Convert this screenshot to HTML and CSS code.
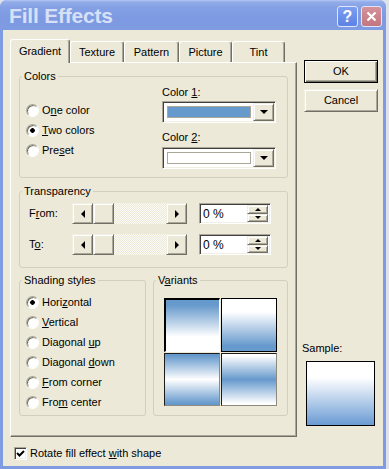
FILE: index.html
```html
<!DOCTYPE html>
<html>
 <head>
  <meta charset="UTF-8">
  <title>Fill Effects</title>
  <link rel="stylesheet" href="styles.css">
 </head>
 <body>
  <div class="win">
   <div class="title">
    <span class="title-text">Fill Effects</span>
    <div class="cap-btns">
     <span class="cap-btn help">?</span>
     <span class="cap-btn close">
      <svg width="11" height="11" viewBox="0 0 11 11"><path d="M1.5 1.5 L9.5 9.5 M9.5 1.5 L1.5 9.5" stroke="#fff" stroke-width="2.2"/></svg>
     </span>
    </div>
   </div>
   <div class="client">
    <div class="main">
     <div class="left">
      <div class="tabs">
       <div class="tab sel" style="width:60px">Gradient</div>
       <div class="tab" style="width:54px">Texture</div>
       <div class="tab" style="width:55px">Pattern</div>
       <div class="tab" style="width:53px">Picture</div>
       <div class="tab" style="width:53px">Tint</div>
      </div>
      <div class="panel">
       <fieldset class="grp colors">
        <legend>Colors</legend>
        <div class="colors-body">
         <div class="radios">
          <div class="opt"><span class="rb"></span><span>O<u>n</u>e color</span></div>
          <div class="opt"><span class="rb on"></span><span><u>T</u>wo colors</span></div>
          <div class="opt"><span class="rb"></span><span>Pre<u>s</u>et</span></div>
         </div>
         <div class="pickers">
          <div class="lbl">Color <u>1</u>:</div>
          <div class="combo sunken">
           <span class="swatch blue"></span>
           <span class="drop raised"><span class="tri-d"></span></span>
          </div>
          <div class="lbl lbl2">Color <u>2</u>:</div>
          <div class="combo sunken">
           <span class="swatch white"></span>
           <span class="drop raised"><span class="tri-d"></span></span>
          </div>
         </div>
        </div>
       </fieldset>

       <fieldset class="grp trans">
        <legend>Transparency</legend>
        <div class="trow">
         <span class="tlbl">F<u>r</u>om:</span>
         <div class="sb">
          <span class="sbtn raised"><span class="tri-l"></span></span>
          <span class="thumb raised"></span>
          <span class="track"></span>
          <span class="sbtn raised"><span class="tri-r"></span></span>
         </div>
         <div class="spin sunken">
          <span class="spin-val">0 %</span>
          <span class="spin-btns">
           <span class="sp raised"><span class="tri-u"></span></span>
           <span class="sp raised"><span class="tri-d small"></span></span>
          </span>
         </div>
        </div>
        <div class="trow trow2">
         <span class="tlbl">T<u>o</u>:</span>
         <div class="sb">
          <span class="sbtn raised"><span class="tri-l"></span></span>
          <span class="thumb raised"></span>
          <span class="track"></span>
          <span class="sbtn raised"><span class="tri-r"></span></span>
         </div>
         <div class="spin sunken">
          <span class="spin-val">0 %</span>
          <span class="spin-btns">
           <span class="sp raised"><span class="tri-u"></span></span>
           <span class="sp raised"><span class="tri-d small"></span></span>
          </span>
         </div>
        </div>
       </fieldset>

       <div class="bottom-row">
        <fieldset class="grp shading">
         <legend>Shading styles</legend>
         <div class="opt"><span class="rb on"></span><span>Hori<u>z</u>ontal</span></div>
         <div class="opt"><span class="rb"></span><span><u>V</u>ertical</span></div>
         <div class="opt"><span class="rb"></span><span>Diagonal <u>u</u>p</span></div>
         <div class="opt"><span class="rb"></span><span>Diagonal <u>d</u>own</span></div>
         <div class="opt"><span class="rb"></span><span><u>F</u>rom corner</span></div>
         <div class="opt"><span class="rb"></span><span>Fro<u>m</u> center</span></div>
        </fieldset>
        <fieldset class="grp variants">
         <legend>V<u>a</u>riants</legend>
         <div class="tiles">
          <span class="tile t1 sel"></span>
          <span class="tile t2"></span>
          <span class="tile t3"></span>
          <span class="tile t4"></span>
         </div>
        </fieldset>
       </div>
      </div>
     </div>
     <div class="right">
      <div class="btn def">OK</div>
      <div class="btn raised">Cancel</div>
      <div class="sample">
       <div class="sample-lbl">Sample:</div>
       <div class="sample-box"></div>
      </div>
     </div>
    </div>
    <div class="foot">
     <span class="cb sunken">
      <svg width="9" height="9" viewBox="0 0 9 9"><path d="M1 4 L3.5 6.5 L8 2" stroke="#000" stroke-width="2" fill="none"/></svg>
     </span>
     <span>Rotate fill effect <u>w</u>ith shape</span>
    </div>
   </div>
  </div>
 </body>
</html>
```

FILE: styles.css
```css
*{ margin:0; padding:0; box-sizing:border-box;}

body{
 background:#dfe2ea;
 font-family:"Liberation Sans", Arial, sans-serif;
 font-size:11px;
 line-height:13px;
 color:#000;
}

u{ text-decoration:underline; text-underline-offset:1px;}

.win{
 width:386px;
 height:469px;
 background:#7f9be2;
 border-radius:7px 7px 0 0;
 display:flex;
 flex-direction:column;
}

.title{
 height:30px;
 display:flex;
 justify-content:space-between;
 border-radius:7px 7px 0 0;
 background:linear-gradient(#b4c6f3 0, #93ace9 2px, #84a0e5 8px, #7d99e1 60%, #7f9be2 100%);
}
.title-text{
 padding:4px 0 0 9px;
 font-size:21px;
 line-height:24px;
 font-weight:bold;
 color:#d6e0f7;
 letter-spacing:-0.2px;
}

.cap-btns{
 display:flex;
 gap:3px;
 margin:6px 4px 0 0;
}
.cap-btn{
 width:21px;
 height:21px;
 border:1px solid #dfe6fa;
 border-radius:3px;
 display:flex;
 align-items:center;
 justify-content:center;
 color:#fff;
 font-weight:bold;
 font-size:16px;
}
.cap-btn.help{ background:linear-gradient(#7d9ff0, #5c82e4);}
.cap-btn.close{ background:linear-gradient(#d6929a, #c27680);}

.client{
 flex:1;
 margin:0 3px 3px 3px;
 background:#ece9d8;
 padding:9px 0 0 7px;
}

.main{ display:flex;}

.left{ width:287px;}

/* tabs */
.tabs{
 height:23px;
 display:flex;
 align-items:flex-end;
}
.tab{
 height:21px;
 border:1px solid #fff;
 border-right-color:#716f64;
 border-bottom:none;
 border-radius:3px 3px 0 0;
 box-shadow:inset -1px 0 #aca899;
 text-align:center;
 padding-top:4px;
 background:#ece9d8;
}
.tab.sel{
 height:24px;
 margin-bottom:-1px;
 position:relative;
 z-index:1;
 padding-top:5px;
}

.panel{
 height:375px;
 border:1px solid #fff;
 border-right-color:#716f64;
 border-bottom-color:#716f64;
 box-shadow:inset -1px -1px #aca899;
}

/* group boxes */
.grp{
 border:1px solid #d0d0bf;
 border-radius:3px;
 min-width:0;
 margin:0 8px;
}
.grp legend{
 padding:0 2px;
 margin-left:2px;
 line-height:13px;
}

.colors{ margin-top:7px; padding-bottom:8px;}
.colors-body{ display:flex;}
.radios{
 width:142px;
 padding:17px 0 0 6px;
}
.opt{
 height:20px;
 display:flex;
 align-items:center;
 gap:3px;
}
.rb{
 width:13px;
 height:13px;
 border-radius:50%;
 border:1px solid;
 border-color:#aca899 #fff #fff #aca899;
 box-shadow:inset 1px 1px #716f64;
 background:#fff;
 flex:none;
}
.rb.on{ background:radial-gradient(circle, #000 0 2px, #fff 2.6px);}

.pickers{ padding-top:3px;}
.lbl{ margin-bottom:2px;}
.lbl2{ margin-top:8px; margin-bottom:3px;}

.sunken{
 border:1px solid;
 border-color:#aca899 #fff #fff #aca899;
 box-shadow:inset 1px 1px #404040, inset -1px -1px #f1efe2;
}
.raised{
 background:#ece9d8;
 border:1px solid;
 border-color:#f1efe2 #716f64 #716f64 #f1efe2;
 box-shadow:inset 1px 1px #fff, inset -1px -1px #aca899;
}

.combo{
 width:114px;
 height:22px;
 background:#fff;
 display:flex;
 align-items:center;
 padding:1px 1px 1px 4px;
}
.swatch{
 width:84px;
 height:12px;
 border:1px solid #aca899;
}
.swatch.blue{ background:#6699cc;}
.swatch.white{ background:#fff;}
.drop{
 margin-left:auto;
 width:21px;
 height:18px;
 display:flex;
 align-items:center;
 justify-content:center;
}

.tri-d{ width:0; height:0; border-left:4px solid transparent; border-right:4px solid transparent; border-top:4px solid #000;}
.tri-d.small{ border-left-width:3px; border-right-width:3px; border-top-width:3px;}
.tri-u{ width:0; height:0; border-left:3px solid transparent; border-right:3px solid transparent; border-bottom:3px solid #000;}
.tri-l{ width:0; height:0; border-top:4px solid transparent; border-bottom:4px solid transparent; border-right:4px solid #000;}
.tri-r{ width:0; height:0; border-top:4px solid transparent; border-bottom:4px solid transparent; border-left:4px solid #000;}

/* transparency */
.trans{ margin-top:7px; padding-bottom:12px;}
.trow{
 display:flex;
 align-items:center;
 margin-top:5px;
 padding-left:9px;
}
.trow2{ margin-top:10px;}
.tlbl{ width:43px;}
.sb{
 display:flex;
 width:115px;
 height:21px;
}
.sbtn{
 width:21px;
 display:flex;
 align-items:center;
 justify-content:center;
}
.thumb{ width:21px;}
.track{
 flex:1;
 background:repeating-conic-gradient(#fbfaf6 0 25%, #ece9d8 0 50%) 0 0/2px 2px;
}
.spin{
 margin-left:12px;
 width:72px;
 height:21px;
 background:#fff;
 display:flex;
 padding:1px 2px 1px 3px;
}
.spin-val{ flex:1; padding-top:3px; font-size:12px;}
.spin-btns{
 width:21px;
 display:flex;
 flex-direction:column;
}
.sp{
 flex:1;
 display:flex;
 align-items:center;
 justify-content:center;
}

/* shading + variants */
.bottom-row{
 display:flex;
 gap:7px;
 margin:6px 8px 0;
}
.bottom-row .grp{ margin:0;}
.shading{
 width:127px;
 padding:5px 0 3px 0;
}
.shading .opt{ margin-left:6px;}
.variants{
 width:135px;
 padding-top:11px;
}
.tiles{
 display:grid;
 grid-template-columns:56px 56px;
 grid-template-rows:54px 53px;
 gap:1px;
 margin-left:10px;
}
.tile{
 border:1px solid #1c1c1c;
 border-right-color:#8d8b80;
 border-bottom-color:#8d8b80;
}
.tile.sel{
 border-width:2px 1px 1px 2px;
 border-color:#000 #fff #fff #000;
}
.t1{ background:linear-gradient(#6699cc 10%, #fff 72%);}
.t2{ background:linear-gradient(#fff 25%, #6699cc 90%); border-color:#000;}
.t3{ background:linear-gradient(#6699cc 3%, #fff 50%, #6699cc 97%);}
.t4{ background:linear-gradient(#fff 3%, #6699cc 50%, #fff 97%);}

/* right column */
.right{
 margin-left:7px;
 width:74px;
 display:flex;
 flex-direction:column;
}
.btn{
 height:23px;
 display:flex;
 align-items:center;
 justify-content:center;
}
.btn.def{
 margin-top:21px;
 border:1px solid #000;
 background:#ece9d8;
 box-shadow:inset 1px 1px #fff, inset -1px -1px #716f64, inset -2px -2px #aca899;
}
.btn.raised{ margin-top:6px;}

.sample{
 margin-top:auto;
 padding-bottom:11px;
}
.sample-lbl{ margin-left:-2px;}
.sample-box{
 margin:6px 0 0 2px;
 width:69px;
 height:65px;
 border:1px solid #000;
 background:linear-gradient(#fff 25%, #6a9bd4 100%);
}

.foot{
 margin:10px 0 0 4px;
 display:flex;
 align-items:center;
 gap:3px;
}
.cb{
 width:13px;
 height:13px;
 background:#fff;
 display:flex;
 align-items:center;
 justify-content:center;
}
```
